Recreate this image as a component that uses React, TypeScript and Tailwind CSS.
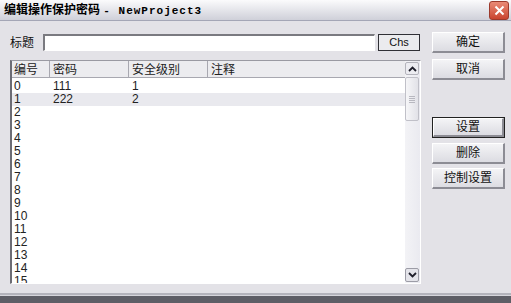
import React from "react";

const rows = [
  { id: "0", pwd: "111", level: "1", note: "" },
  { id: "1", pwd: "222", level: "2", note: "" },
];

const font = { fontFamily: '"Liberation Sans", "Noto Sans CJK SC", sans-serif' };

function Btn({ label, def }: { label: string; def?: boolean }) {
  return (
    <div className={`h-[21px] w-[73px] ${def ? "border border-[#222]" : ""}`}>
      <div className="flex h-full w-full items-center justify-center border-t border-l border-t-white border-l-white border-r-2 border-b-2 border-r-[#8c8c94] border-b-[#8c8c94] bg-gradient-to-b from-[#f4f4f6] to-[#dcdce2] text-[12px] text-[#111]">
        {label}
      </div>
    </div>
  );
}

function Chevron({ up }: { up?: boolean }) {
  return (
    <svg width="9" height="6" viewBox="0 0 9 6">
      <path
        d={up ? "M1 5 L4.5 1.5 L8 5" : "M1 1 L4.5 4.5 L8 1"}
        stroke="#1e1e2a"
        strokeWidth="1.8"
        fill="none"
      />
    </svg>
  );
}

export default function App() {
  const list = Array.from({ length: 16 }, (_, i) => {
    const r = rows[i];
    return { id: String(i), pwd: r?.pwd ?? "", level: r?.level ?? "", note: "" };
  });

  return (
    <div className="flex h-[303px] w-[511px] flex-col overflow-hidden bg-[#e3e2e7]" style={font}>
      {/* title bar */}
      <div className="flex h-[21px] shrink-0 items-center justify-between border-b border-[#a4a6b6] bg-gradient-to-b from-[#fbfbfc] to-[#cfd0d9] pl-[4px] pr-[2px]">
        <span className="text-[12px] font-bold leading-none text-black">
          编辑操作保护密码{" "}
          <span className="text-[11px] tracking-[1px]" style={{ fontFamily: '"Liberation Mono", monospace' }}>
            - NewProject3
          </span>
        </span>
        <div className="flex h-[19px] w-[20px] items-center justify-center rounded-[3px] border border-[#9c3a2c] bg-gradient-to-b from-[#e98a76] to-[#c9432e]">
          <svg width="11" height="11" viewBox="0 0 11 11">
            <path d="M1.5 1.5 L9.5 9.5 M9.5 1.5 L1.5 9.5" stroke="#fff" strokeWidth="2" />
          </svg>
        </div>
      </div>

      {/* body */}
      <div className="flex flex-1 pl-[10px]">
        <div className="flex w-[411px] flex-col pt-[13px]">
          <div className="flex h-[17px] items-center">
            <span className="w-[33px] text-[12px] text-[#111]">标题</span>
            <div className="h-[17px] w-[332px] border-t-2 border-l-2 border-t-[#7a7a80] border-l-[#7a7a80] border-r border-b border-r-white border-b-white bg-white" />
            <div className="ml-[3px] flex h-[17px] w-[42px] items-center justify-center border border-[#303036] bg-[#ebebee] text-[11px] text-[#111]">
              Chs
            </div>
          </div>

          {/* list */}
          <div className="mt-[9px] flex h-[224px] border-t border-l-2 border-t-[#9a9aa2] border-l-[#6c6c74] border-r border-b border-r-white border-b-white bg-white">
            <div className="flex flex-1 flex-col overflow-hidden">
              <div className="flex h-[17px] shrink-0 border-b border-[#a8a8b0] bg-[#ececef] text-[12px] text-[#222]">
                <div className="w-[38px] border-r border-[#a8a8b0] pl-[2px]">编号</div>
                <div className="w-[79px] border-r border-[#a8a8b0] pl-[3px]">密码</div>
                <div className="w-[79px] border-r border-[#a8a8b0] pl-[3px]">安全级别</div>
                <div className="flex-1 pl-[3px]">注释</div>
              </div>
              <div className="pt-[2px]">
                {list.map((r, i) => (
                  <div
                    key={r.id}
                    className={`flex h-[13px] items-center text-[12px] leading-[13px] text-[#222] ${i === 1 ? "bg-[#e9e9ee]" : ""}`}
                  >
                    <div className="w-[38px] pl-[2px]">{r.id}</div>
                    <div className="w-[79px] pl-[3px]">{r.pwd}</div>
                    <div className="w-[79px] pl-[3px]">{r.level}</div>
                    <div className="flex-1 pl-[3px]">{r.note}</div>
                  </div>
                ))}
              </div>
            </div>

            {/* scrollbar */}
            <div className="flex w-[15px] flex-col bg-gradient-to-r from-[#f3f3f6] to-[#eaeaf0] py-[1px] pr-[1px]">
              <div className="flex h-[13px] items-center justify-center rounded-[2px] border border-[#b4b4bc] bg-[#ececf1]">
                <Chevron up />
              </div>
              <div className="mt-[2px] flex h-[44px] items-center justify-center rounded-[2px] border border-[#c0c0c8] bg-gradient-to-r from-[#f6f6f8] to-[#e2e2e8]">
                <div className="flex flex-col gap-[1px]">
                  <div className="h-px w-[6px] bg-[#b8b8c0]" />
                  <div className="h-px w-[6px] bg-[#b8b8c0]" />
                  <div className="h-px w-[6px] bg-[#b8b8c0]" />
                  <div className="h-px w-[6px] bg-[#b8b8c0]" />
                </div>
              </div>
              <div className="flex-1" />
              <div className="flex h-[14px] items-center justify-center rounded-[2px] border border-[#9c9ca6] bg-[#e4e4ea]">
                <Chevron />
              </div>
            </div>
          </div>
        </div>

        {/* buttons */}
        <div className="ml-[11px] flex flex-col pt-[11px]">
          <Btn label="确定" />
          <div className="mt-[6px]">
            <Btn label="取消" />
          </div>
          <div className="mt-[37px]">
            <Btn label="设置" def />
          </div>
          <div className="mt-[5px]">
            <Btn label="删除" />
          </div>
          <div className="mt-[4px]">
            <Btn label="控制设置" />
          </div>
        </div>
      </div>

      {/* bottom edge */}
      <div className="h-[2px] shrink-0 bg-[#b4b4bc]" />
      <div className="h-[1px] shrink-0 bg-[#d6d6dc]" />
      <div className="h-[7px] shrink-0 bg-[#5e5e66]" />
    </div>
  );
}
